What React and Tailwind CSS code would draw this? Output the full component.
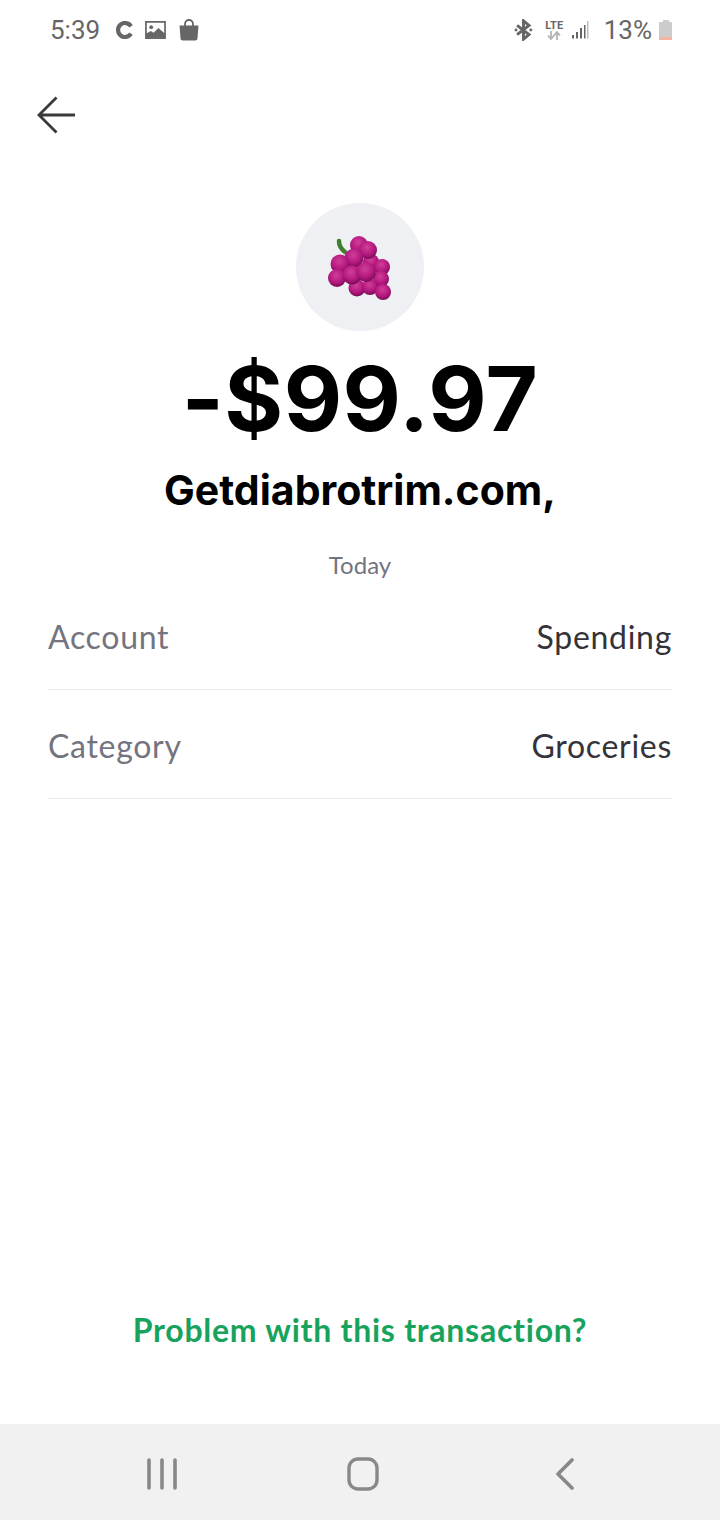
const grapes = [
  [359, 245, 9],
  [371, 262, 8],
  [382, 267, 8],
  [381, 279, 8],
  [368, 250, 9],
  [354, 258, 9.500],
  [340, 264, 9.500],
  [337, 278, 9],
  [357, 288, 8.500],
  [370, 287, 8],
  [352, 275, 9.500],
  [366, 272, 10],
  [383, 292, 8],
];

function StatusBar() {
  return (
    <div className="h-[60px] flex items-center justify-between pl-[50px] pr-[48px] font-['Roboto',sans-serif] text-[#666666]">
      <div className="flex items-center">
        <span className="text-[26px] leading-none w-[49px]">5:39</span>
        <svg width="18" height="18" viewBox="0 0 18 18" className="ml-[16px]">
          <path d="M16 5.300A7 7 0 1 0 16 12.700" fill="none" stroke="#666666" strokeWidth="4.200" />
        </svg>
        <svg width="21" height="20" viewBox="0 0 22 20" className="ml-[12px]">
          <path d="M1 1.500h20v17H1z" fill="none" stroke="#666666" strokeWidth="1.800" />
          <circle cx="6.500" cy="7" r="2" fill="#666666" />
          <path d="M1 18v-4l5-3 3 2 5-5 7 6v4z" fill="#666666" />
        </svg>
        <svg width="20" height="22" viewBox="0 0 20 22" className="ml-[13px]">
          <path d="M6 7V5a4 4 0 0 1 8 0v2" fill="none" stroke="#666666" strokeWidth="1.800" />
          <path d="M0.500 6.500h19l-1 12.500a2.500 2.500 0 0 1-2.500 2.500H4A2.500 2.500 0 0 1 1.500 19z" fill="#666666" />
        </svg>
      </div>
      <div className="flex items-center">
        <svg width="19" height="22" viewBox="0 0 20 24">
          <path d="M3 7l13 10-6 5V2l6 5L3 17" fill="none" stroke="#666666" strokeWidth="3.200" />
          <circle cx="1.800" cy="12" r="1.600" fill="#666666" />
          <circle cx="18" cy="12" r="1.600" fill="#666666" />
        </svg>
        <div className="ml-[11px] w-[21px] flex flex-col items-center">
          <span className="text-[11px] leading-[11px] font-bold">LTE</span>
          <svg width="16" height="9" viewBox="0 0 16 9">
            <path d="M5 0v7M2 4.500L5 8l3-3.500M11 9V2M8 4.500L11 1l3 3.500" fill="none" stroke="#b5b5b5" strokeWidth="1.800" />
          </svg>
        </div>
        <svg width="18" height="20" viewBox="0 0 18 20" className="ml-[6px]">
          <path d="M1 15h2v3.500H1zM5 12h2v6.500H5zM9 8h2v10.500H9zM13 5h1.500v13.500H13z" fill="#666666" />
          <path d="M16 1h1.500v17.500H16z" fill="#bdbdbd" />
        </svg>
        <span className="ml-[15px] text-[26px] leading-none">13%</span>
        <div className="ml-[7px] w-[13px] h-[20px] flex flex-col items-center">
          <div className="w-[6px] h-[2px] bg-[#cccccc]" />
          <div className="w-[13px] flex-1 bg-[#cccccc] rounded-t-[1px]" />
          <div className="w-[13px] h-[3px] bg-[#f2b5a3]" />
        </div>
      </div>
    </div>
  );
}

function Row({ label, value }) {
  return (
    <div className="h-[109px] flex items-center justify-between border-b border-[#ececef] text-[32px] leading-none tracking-[0.7px] pt-[5px] pb-[2px]">
      <span className="text-[#74747f]">{label}</span>
      <span className="text-[#333338]">{value}</span>
    </div>
  );
}

export default function App() {
  return (
    <div className="w-[720px] h-[1520px] bg-white flex flex-col font-['Lato',sans-serif]">
      <StatusBar />

      <div className="h-[112px] pl-[37px] pt-[35px]">
        <svg width="40" height="40" viewBox="0 0 40 40">
          <path d="M38 20H2M19.500 2.500L2 20 19.500 37.500" fill="none" stroke="#3a3a3a" strokeWidth="2.800" />
        </svg>
      </div>

      <div className="flex flex-col items-center">
        <div className="mt-[31px] w-[128px] h-[128px] rounded-full bg-[#eef0f3]">
          <svg width="128" height="128" viewBox="296 203 128 128">
            <defs>
              <radialGradient id="grape" cx="0.45" cy="0.35" r="0.68">
                <stop offset="0" stopColor="#d03f97" />
                <stop offset="0.6" stopColor="#b5187f" />
                <stop offset="1" stopColor="#6f0c50" />
              </radialGradient>
            </defs>
            <path d="M339 241c0 5 2 8 6 11" fill="none" stroke="#3f7f2e" strokeWidth="4.500" strokeLinecap="round" />
            {grapes.map(([cx, cy, r], i) => (
              <circle key={i} cx={cx} cy={cy} r={r} fill="url(#grape)" />
            ))}
          </svg>
        </div>

        <div className="mt-[20px] h-[96px] flex items-center font-['Inter',sans-serif] font-bold text-[90px] leading-none text-black tracking-[0.5px]">
          -$99.97
        </div>
        <div className="mt-[18px] h-[50px] flex items-center font-['Inter',sans-serif] font-bold text-[41px] leading-none text-black">
          Getdiabrotrim.com,
        </div>
        <div className="mt-[35px] h-[30px] flex items-center text-[24px] leading-none text-[#74747f]">Today</div>
      </div>

      <div className="px-[48px] mt-[1px]">
        <Row label="Account" value="Spending" />
        <Row label="Category" value="Groceries" />
      </div>

      <div className="flex-1 flex items-end justify-center pb-[78px]">
        <span className="font-bold text-[32px] leading-none tracking-[0.75px] text-[#17a35c]">Problem with this transaction?</span>
      </div>

      <div className="h-[96px] bg-[#f1f1f1] flex items-center justify-between pl-[147px] pr-[145px] pt-[4px]">
        <svg width="30" height="32" viewBox="0 0 30 32">
          <path d="M2 2v28M15 2v28M28 2v28" stroke="#888888" strokeWidth="3.600" strokeLinecap="round" />
        </svg>
        <svg width="32" height="34" viewBox="0 0 32 34" className="mr-[6px]">
          <rect x="2" y="2" width="28" height="30" rx="9" fill="none" stroke="#888888" strokeWidth="3.400" />
        </svg>
        <svg width="20" height="32" viewBox="0 0 20 32">
          <path d="M17 2L3 16l14 14" fill="none" stroke="#888888" strokeWidth="3.600" strokeLinecap="round" strokeLinejoin="round" />
        </svg>
      </div>
    </div>
  );
}
